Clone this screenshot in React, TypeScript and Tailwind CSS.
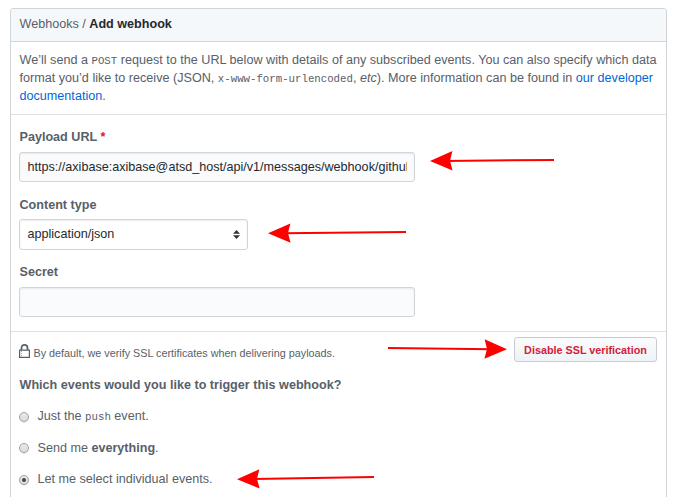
import React from "react";

const Code = ({ children }: { children: React.ReactNode }) => (
  <code className="font-['Liberation_Mono',monospace] text-[10.72px] leading-none">{children}</code>
);

const Label = ({ children }: { children: React.ReactNode }) => (
  <label className="block h-[18px] pl-[0.5px] font-bold">{children}</label>
);

const Radio = ({ checked, children }: { checked?: boolean; children: React.ReactNode }) => (
  <label className="flex h-[18px] items-center">
    <span className="mt-px flex size-[10px] shrink-0 items-center justify-center rounded-full border border-[#a0a0a0] bg-linear-to-b from-[#e9e9e9] to-[#dcdcdc] shadow-[0_1px_1px_rgba(0,0,0,0.08)]">
      {checked && <span className="size-1 rounded-full bg-[#444]" />}
    </span>
    <span className="ml-[8.5px]">{children}</span>
  </label>
);

function Arrow({ from, to }: { from: [number, number]; to: [number, number] }) {
  const angle = (Math.atan2(to[1] - from[1], to[0] - from[0]) * 180) / Math.PI;
  const length = Math.hypot(to[0] - from[0], to[1] - from[1]);
  return (
    <g transform={`translate(${to[0]} ${to[1]}) rotate(${angle})`} fill="#f00">
      <rect x={-length} y={-1} width={length - 15} height={2} />
      <path d="M0 0 L-22.5 -9.7 L-20 0 L-22.5 9.7 Z" />
    </g>
  );
}

export default function App() {
  return (
    <div className="relative h-[497px] w-[679px] overflow-hidden bg-white pt-2 pl-[10px] font-['Liberation_Sans',Arial,sans-serif] text-[12.6px] leading-[18px] text-[#586069]">
      <main className="h-[520px] w-[657px] rounded-[3px] border border-[#d1d5da]">
        <header className="h-[33px] rounded-t-[2px] border-b border-[#d1d5da] bg-[#f4f8fb] px-[8.5px] pt-[6px]">
          Webhooks / <b className="text-[#24292e]">Add webhook</b>
        </header>
        <section className="h-[73px] border-b border-[#dfe2e5] px-[8.5px] pt-[9px] whitespace-nowrap">
          <p className="text-[12.62px]">
            We’ll send a <Code>POST</Code> request to the URL below with details of any subscribed events. You can also specify which data
            <br />
            format you’d like to receive (JSON, <Code>x-www-form-urlencoded</Code>, <em>etc</em>). More information can be found in <a className="text-[#0366d6]">our developer</a>
            <br />
            <a className="text-[#0366d6]">documentation</a>.
          </p>
        </section>
        <section className="flex h-[217px] flex-col border-b border-[#dfe2e5] px-2 pt-[13px]">
          <Label>
            Payload URL <span className="text-[#d3203a]">*</span>
          </Label>
          <div className="mt-[6px] h-[30px] w-[396px] rounded-[3px] border border-[#d1d5da] bg-[#fafbfc] px-[7.5px] pt-[5px] text-[#24292e] shadow-[inset_0_1px_2px_rgba(27,31,35,0.075)]">
            <div className="overflow-hidden whitespace-nowrap">https://axibase:axibase@atsd_host/api/v1/messages/webhook/github</div>
          </div>
          <div className="mt-[14px]">
            <Label>Content type</Label>
          </div>
          <div className="mt-[5px] flex h-[31px] w-[229px] items-center justify-between rounded-[3px] border border-[#d1d5da] bg-white pr-[7px] pl-[7.5px] text-[#24292e] shadow-[inset_0_1px_2px_rgba(27,31,35,0.075)]">
            <span className="pb-[2px]">application/json</span>
            <svg width="7" height="9" viewBox="0 0 7 9" fill="#333">
              <path d="M0 3.7 3.5 0 7 3.7ZM0 5.3 3.5 9 7 5.3Z" />
            </svg>
          </div>
          <div className="mt-[13px]">
            <Label>Secret</Label>
          </div>
          <div className="mt-[6px] h-[30px] w-[396px] rounded-[3px] border border-[#d1d5da] bg-[#fafbfc] shadow-[inset_0_1px_2px_rgba(27,31,35,0.075)]" />
        </section>
        <section className="px-2">
          <div className="flex h-[35px] items-start justify-between pt-[5px] pr-px">
            <div className="flex pt-[7px] text-[10.8px]">
              <svg className="mr-[3.5px]" width="11" height="15" viewBox="0 0 11 15" fill="none" stroke="#586069">
                <path strokeWidth="1.2" d="M.6 6.1H10.4V13.4H.6Z" />
                <path strokeWidth="1.7" d="M2.5 6V3.8C2.5 1.8 3.7.9 5.5.9S8.5 1.8 8.5 3.8V6" />
                <path strokeOpacity=".5" strokeDasharray="1 1" d="M2.5 7V13" />
              </svg>
              <span className="leading-[18px]">By default, we verify SSL certificates when delivering payloads.</span>
            </div>
            <button className="h-[25px] w-[143px] rounded-[3px] border border-[#c8ccd0] bg-linear-to-b from-[#fafbfc] to-[#eff3f6] text-[10.8px] leading-[18px] font-bold whitespace-nowrap text-[#d3203a]">
              Disable SSL verification
            </button>
          </div>
          <h2 className="mt-[9px] h-[18px] pl-[0.5px] font-bold">Which events would you like to trigger this webhook?</h2>
          <div className="mt-[13px] flex flex-col gap-[13.5px]">
            <Radio>
              Just the <Code>push</Code> event.
            </Radio>
            <Radio>
              Send me <b>everything</b>.
            </Radio>
            <Radio checked>Let me select individual events.</Radio>
          </div>
        </section>
      </main>
      <svg className="pointer-events-none absolute inset-0" width="679" height="497">
        <Arrow from={[554, 160]} to={[430, 161]} />
        <Arrow from={[406, 232]} to={[268, 233.3]} />
        <Arrow from={[388, 348]} to={[507, 349.3]} />
        <Arrow from={[374, 477]} to={[237, 479.3]} />
      </svg>
    </div>
  );
}
